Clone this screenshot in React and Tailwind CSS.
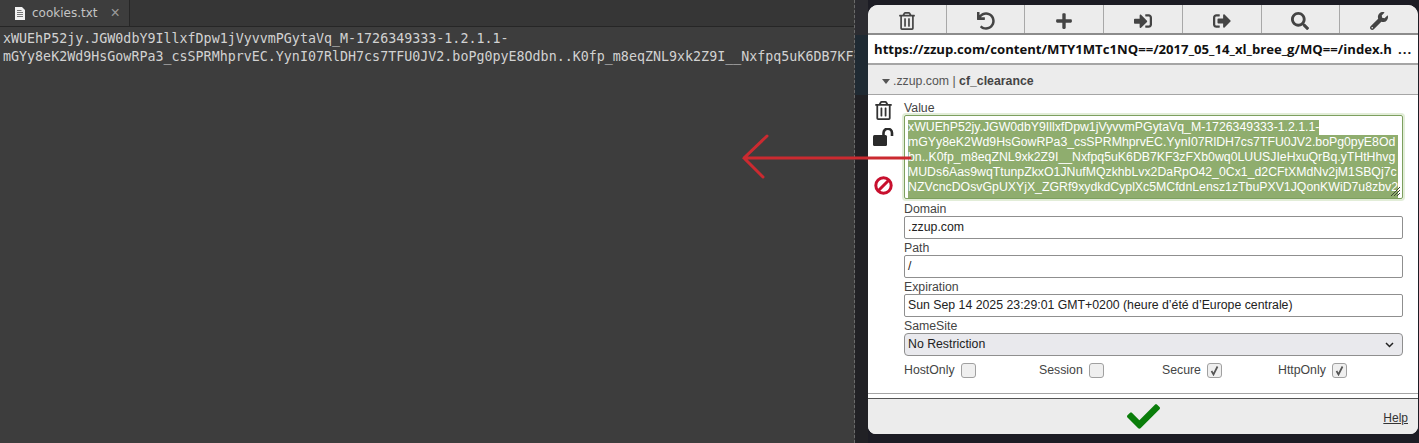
import React from "react";
import { FaRegTrashAlt, FaUndo, FaPlus, FaSignInAlt, FaSignOutAlt, FaSearch, FaWrench, FaCheck } from "react-icons/fa";

const sans = { fontFamily: '"Liberation Sans", Arial, sans-serif' };

const lines = [
  "xWUEhP52jy.JGW0dbY9IllxfDpw1jVyvvmPGytaVq_M-1726349333-1.2.1.1-",
  "mGYy8eK2Wd9HsGowRPa3_csSPRMhprvEC.YynI07RlDH7cs7TFU0JV2.boPg0pyE8Od",
  "bn..K0fp_m8eqZNL9xk2Z9I__Nxfpq5uK6DB7KF3zFXb0wq0LUUSJIeHxuQrBq.yTHtHhvg",
  "MUDs6Aas9wqTtunpZkxO1JNufMQzkhbLvx2DaRpO42_0Cx1_d2CFtXMdNv2jM1SBQj7c",
  "NZVcncDOsvGpUXYjX_ZGRf9xydkdCyplXc5MCfdnLensz1zTbuPXV1JQonKWiD7u8zbv2",
];

function Tool({ icon, last }) {
  return (
    <div className={"flex-1 flex items-center justify-center pt-[3px] text-[#444] text-[18px] " + (last ? "" : "border-r border-[#a8a8a8]")}>
      {icon}
    </div>
  );
}

function Label({ children }) {
  return <div className="h-[16px] text-[12.3px] leading-[18px] text-[#444]">{children}</div>;
}

function Field({ label, value }) {
  return (
    <div className="flex flex-col">
      <Label>{label}</Label>
      <div className="h-[23px] border border-[#8f8f8f] rounded-[2px] bg-white px-[3px] text-[12.3px] leading-[21px] text-[#222] whitespace-nowrap">{value}</div>
    </div>
  );
}

function Check({ label, checked, width }) {
  return (
    <div className={"flex items-center gap-[6px] text-[12.3px] text-[#444] " + width}>
      <span>{label}</span>
      <span className="w-[15px] h-[15px] border border-[#a0a0a0] rounded-[3px] bg-[#efefef] flex items-center justify-center">
        {checked && <svg width="11" height="11" viewBox="0 0 11 11"><path d="M2.5 6 L4.5 9.5 L8.5 1.5" fill="none" stroke="#555" strokeWidth="1.7" /></svg>}
      </span>
    </div>
  );
}

export default function App() {
  return (
    <div className="relative w-[1419px] h-[443px] overflow-hidden bg-[#1c1c24] flex">
      <div className="w-[855px] h-full shrink-0 bg-[#3d3d3d] flex flex-col border-r border-dashed border-[#6a6a6a]">
        <div className="h-[27px] bg-[#363636] border-b border-[#262626] flex shrink-0">
          <div className="w-[130px] h-[26px] bg-[#3d3d3d] border-r border-[#262626] flex items-center pl-[15px] gap-[7px]">
            <svg width="10" height="13" viewBox="0 0 10 13">
              <path d="M0 0H7L10 3V13H0Z" fill="#f2f2f2" />
              <path d="M2 3.5H6.5M2 5.5H8M2 7.5H8M2 9.5H8" stroke="#777" strokeWidth="1" />
            </svg>
            <span className="text-[#c4c4c4]" style={{ fontFamily: '"DejaVu Sans", sans-serif', fontSize: 12 }}>cookies.txt</span>
            <span className="text-[#9a9a9a] text-[16px] leading-none ml-[6px]" style={sans}>×</span>
          </div>
        </div>
        <div className="pt-[3px] pl-[3px] text-[13.33px] leading-[18px] text-[#d2d2d2] whitespace-pre overflow-hidden" style={{ fontFamily: '"DejaVu Sans Mono", monospace' }}>
          <div>xWUEhP52jy.JGW0dbY9IllxfDpw1jVyvvmPGytaVq_M-1726349333-1.2.1.1-</div>
          <div>mGYy8eK2Wd9HsGowRPa3_csSPRMhprvEC.YynI07RlDH7cs7TFU0JV2.boPg0pyE8Odbn..K0fp_m8eqZNL9xk2Z9I__Nxfpq5uK6DB7KF3</div>
        </div>
      </div>

      <div className="w-[13px] shrink-0 flex flex-col">
        <div className="h-[35px] bg-[#2c2c31]"></div>
        <div className="h-[60px] bg-[#1f2a33]"></div>
        <div className="flex-1 bg-[#212125]"></div>
      </div>

      <div className="mt-[5px] w-[550px] h-[429px] shrink-0 bg-white rounded-t-[10px] rounded-b-[8px] flex flex-col overflow-hidden" style={sans}>
        <div className="h-[30px] bg-[#ececec] border-b-2 border-[#8c8c8c] flex shrink-0">
          <Tool icon={<FaRegTrashAlt />} />
          <Tool icon={<FaUndo />} />
          <Tool icon={<FaPlus />} />
          <Tool icon={<FaSignInAlt />} />
          <Tool icon={<FaSignOutAlt />} />
          <Tool icon={<FaSearch />} />
          <Tool icon={<FaWrench />} last />
        </div>
        <div className="h-[30px] flex items-center pt-[2px] pl-[6px] border-b-2 border-[#a5a5a5] text-[13.15px] font-bold text-[#111] whitespace-nowrap shrink-0" style={{ fontFamily: '"Open Sans", sans-serif' }}>
          <span>https://zzup.com/content/MTY1MTc1NQ==/2017_05_14_xl_bree_g/MQ==/index.h</span>
          <span className="ml-[6px] tracking-[1px]">...</span>
        </div>
        <div className="h-[30px] bg-[#ececec] border-b border-[#a5a5a5] flex items-center pt-[3px] pl-[14px] text-[12.3px] text-[#555] shrink-0">
          <svg width="8" height="5" viewBox="0 0 8 5" className="mr-[3px]"><path d="M0 0H8L4 5Z" fill="#555" /></svg>
          <span>.zzup.com |&nbsp;</span><b className="text-[#444]">cf_clearance</b>
        </div>

        <div className="flex-1 flex min-h-0">
          <div className="w-[36px] shrink-0 pr-[6px] flex flex-col items-center pt-[6px] text-[#333]">
            <FaRegTrashAlt className="text-[19px]" />
            <svg width="21" height="18" viewBox="0 0 21 18" className="mt-[8px]">
              <rect x="0" y="7" width="14" height="11" rx="1.5" fill="#2b2b2b" />
              <path d="M10.5 7.5V5a4.2 4.2 0 0 1 8.5 0V8" fill="none" stroke="#2b2b2b" strokeWidth="2.6" />
            </svg>
            <svg width="19" height="19" viewBox="0 0 19 19" className="mt-[30px]">
              <circle cx="9.5" cy="9.5" r="7.7" fill="none" stroke="#c8102e" strokeWidth="3" />
              <path d="M4 15L15 4" stroke="#c8102e" strokeWidth="3" />
            </svg>
          </div>
          <div className="w-[499px] pt-[4px] flex flex-col">
            <Label>Value</Label>
            <div className="h-[84px] border border-[#7d9f5f] rounded-[2px] shadow-[0_0_0_2px_#e2edd8] pt-[4px] pl-[3px] pr-[4px] text-[12.3px] leading-[15px] text-white whitespace-nowrap overflow-hidden relative">
              {lines.map((l, i) => (
                <div key={i} className={"bg-[#8fad6e] overflow-hidden " + (i === 0 ? "w-fit h-[15px]" : i === 4 ? "h-[18px]" : "h-[15px]")}>{l}</div>
              ))}
              <svg width="9" height="9" viewBox="0 0 9 9" className="absolute right-[2px] bottom-[2px]">
                <path d="M0 9L9 0M3 9L9 3M6 9L9 6" stroke="#3f4a35" strokeWidth="1" />
              </svg>
            </div>
            <div className="mt-[1px] flex flex-col">
              <Field label="Domain" value=".zzup.com" />
              <Field label="Path" value="/" />
              <Field label="Expiration" value="Sun Sep 14 2025 23:29:01 GMT+0200 (heure d’été d’Europe centrale)" />
              <Label>SameSite</Label>
              <div className="h-[23px] border border-[#8f8f8f] rounded-[4px] bg-[#e9e9ed] px-[3px] flex items-center justify-between text-[12.3px] text-[#222]">
                <span>No Restriction</span>
                <svg width="9" height="6" viewBox="0 0 9 6" className="mr-[5px]"><path d="M1 1L4.5 4.5L8 1" fill="none" stroke="#222" strokeWidth="1.5" /></svg>
              </div>
              <div className="flex mt-[5px]">
                <Check label="HostOnly" width="w-[135px]" />
                <Check label="Session" width="w-[123px]" />
                <Check label="Secure" checked width="w-[116px]" />
                <Check label="HttpOnly" checked width="" />
              </div>
            </div>
          </div>
        </div>

        <div className="h-[41px] shrink-0 border-t border-[#a5a5a5]">
          <div className="h-[5px] bg-white border-b border-[#555]"></div>
          <div className="h-[35px] bg-[#ececec] flex items-center relative">
            <div className="flex-1 flex justify-center"><FaCheck className="text-[33px] text-[#0a7d0a]" /></div>
            <a className="absolute right-[10px] top-[10px] text-[12px] underline text-[#333]">Help</a>
          </div>
        </div>
      </div>

      <svg className="absolute left-[740px] top-[130px]" width="175" height="52" viewBox="0 0 175 52">
        <path d="M170 28H4M27 6L4 28L23 47" fill="none" stroke="#cb2a30" strokeWidth="3" strokeLinecap="round" />
      </svg>
    </div>
  );
}
